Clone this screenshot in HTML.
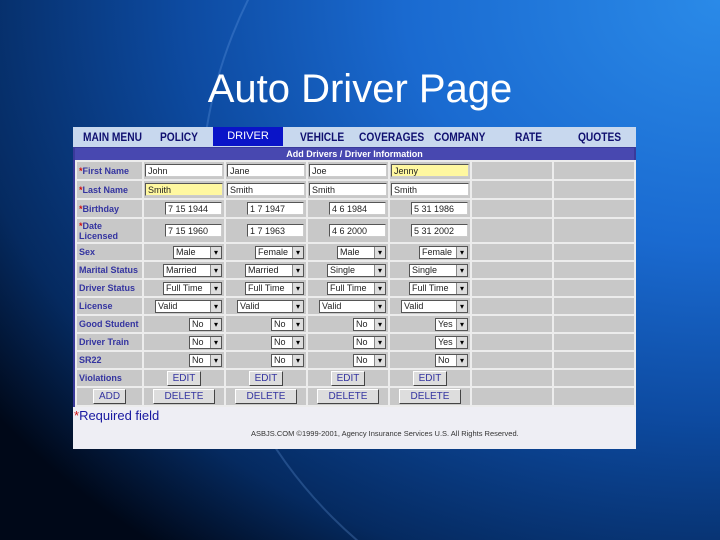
<!DOCTYPE html><html style="width:720px;height:540px;overflow:hidden;margin:0;background:#0d4aa0"><head><style>
body{margin:0;width:720px;height:540px;overflow:hidden;position:relative;font-family:"Liberation Sans",sans-serif;
background:radial-gradient(ellipse 900px 700px at 720px 0px,#2a8ae8 0%,#1a6ad0 35%,#0d4aa0 60%,#052a60 85%,#000818 100%);}
.wrap{position:absolute;left:0;top:0;width:720px;height:540px;overflow:hidden}
.arc{position:absolute;left:200px;top:-250px;width:900px;height:900px;border-radius:50%;border:2px solid rgba(120,170,240,.25);box-sizing:border-box}
h1{position:absolute;top:67px;left:0;width:720px;text-align:center;margin:0;font-weight:normal;font-size:40px;color:#fff;}
.pan{position:absolute;left:73px;top:127px;width:563px;height:322px;background:#eeeef4;}
.nav{position:absolute;left:0;top:0;width:563px;height:20px;background:#c8d8ee;}
.nav span{position:absolute;top:3px;font:bold 12px "Liberation Sans Narrow","Liberation Sans",sans-serif;color:#101070;transform:scaleX(.85);transform-origin:left;}
.nav .on{top:0;height:19px;background:#0a14c8;color:#fff;font-weight:normal;font-size:11px;transform:none;text-align:center;line-height:19px}
.frame{position:absolute;left:0;top:20px;width:563px;height:260px;background:#3a3a9a;}
.hd{position:absolute;left:2px;top:1px;width:559px;height:12px;background:#4848b0;color:#fff;font:bold 9px "Liberation Sans",sans-serif;text-align:center;line-height:12px;}
table{position:absolute;left:2px;top:13px;border-collapse:collapse;}
td{background:#c8c8c8;border:2px solid #ececec;padding:0;font-size:9px;color:#3434a0;font-weight:bold;position:relative;vertical-align:middle}
td.l{padding-left:2px}
.r{color:#d01010}
.i{display:inline-block;background:#fff;border:1px solid #555;border-right-color:#ccc;border-bottom-color:#ccc;height:13px;font:9px "Liberation Sans",sans-serif;color:#222;line-height:12px;padding-left:2px;box-sizing:border-box;vertical-align:middle;text-align:left}
.y{background:#fff8a0}
.s{display:inline-block;background:#fff;border:1px solid #555;height:13px;font:9px "Liberation Sans",sans-serif;color:#222;line-height:11px;padding-left:2px;box-sizing:border-box;position:relative;vertical-align:middle;text-align:left;white-space:nowrap;overflow:hidden}
.s:after{content:"▾";position:absolute;right:0;top:0;width:10px;height:11px;background:#ddd;border-left:1px solid #888;font-size:8px;text-align:center;color:#000}
.b{display:inline-block;background:#ddd;border:1px solid #fff;border-right-color:#444;border-bottom-color:#444;height:15px;font:10px "Liberation Sans",sans-serif;color:#3434a0;text-align:center;line-height:14px;box-sizing:border-box}
.c{text-align:center}.rt{text-align:right;padding-right:2px}
</style></head><body>
<div class="wrap"><div class="arc"></div></div>
<h1>Auto Driver Page</h1>
<div class="pan">
<div class="nav">
<span style="left:10px">MAIN MENU</span><span style="left:87px">POLICY</span>
<span class="on" style="left:140px;width:70px">DRIVER</span>
<span style="left:227px">VEHICLE</span><span style="left:286px">COVERAGES</span><span style="left:361px">COMPANY</span><span style="left:442px">RATE</span><span style="left:505px">QUOTES</span>
</div>
<div class="frame"><div class="hd">Add Drivers / Driver Information</div>
<table>
<colgroup><col style="width:67px"><col style="width:82px"><col style="width:82px"><col style="width:82px"><col style="width:82px"><col style="width:82px"><col style="width:82px"></colgroup>
<tr style="height:19px"><td class="l"><span class="r">*</span>First Name</td><td class="c"><span class="i" style="width:78px">John</span></td><td class="c"><span class="i" style="width:78px">Jane</span></td><td class="c"><span class="i" style="width:78px">Joe</span></td><td class="c"><span class="i y" style="width:78px">Jenny</span></td><td></td><td></td></tr>
<tr style="height:19px"><td class="l"><span class="r">*</span>Last Name</td><td class="c"><span class="i y" style="width:78px">Smith</span></td><td class="c"><span class="i" style="width:78px">Smith</span></td><td class="c"><span class="i" style="width:78px">Smith</span></td><td class="c"><span class="i" style="width:78px">Smith</span></td><td></td><td></td></tr>
<tr style="height:19px"><td class="l"><span class="r">*</span>Birthday</td><td class="rt"><span class="i" style="width:57px">7 15 1944</span></td><td class="rt"><span class="i" style="width:57px">1 7 1947</span></td><td class="rt"><span class="i" style="width:57px">4 6 1984</span></td><td class="rt"><span class="i" style="width:57px">5 31 1986</span></td><td></td><td></td></tr>
<tr style="height:25px"><td class="l" style="line-height:10px"><span class="r">*</span>Date<br>Licensed</td><td class="rt"><span class="i" style="width:57px">7 15 1960</span></td><td class="rt"><span class="i" style="width:57px">1 7 1963</span></td><td class="rt"><span class="i" style="width:57px">4 6 2000</span></td><td class="rt"><span class="i" style="width:57px">5 31 2002</span></td><td></td><td></td></tr>
<tr style="height:18px"><td class="l">Sex</td><td class="rt"><span class="s" style="width:49px">Male</span></td><td class="rt"><span class="s" style="width:49px">Female</span></td><td class="rt"><span class="s" style="width:49px">Male</span></td><td class="rt"><span class="s" style="width:49px">Female</span></td><td></td><td></td></tr>
<tr style="height:18px"><td class="l">Marital Status</td><td class="rt"><span class="s" style="width:59px">Married</span></td><td class="rt"><span class="s" style="width:59px">Married</span></td><td class="rt"><span class="s" style="width:59px">Single</span></td><td class="rt"><span class="s" style="width:59px">Single</span></td><td></td><td></td></tr>
<tr style="height:18px"><td class="l">Driver Status</td><td class="rt"><span class="s" style="width:59px">Full Time</span></td><td class="rt"><span class="s" style="width:59px">Full Time</span></td><td class="rt"><span class="s" style="width:59px">Full Time</span></td><td class="rt"><span class="s" style="width:59px">Full Time</span></td><td></td><td></td></tr>
<tr style="height:18px"><td class="l">License</td><td class="rt"><span class="s" style="width:67px">Valid</span></td><td class="rt"><span class="s" style="width:67px">Valid</span></td><td class="rt"><span class="s" style="width:67px">Valid</span></td><td class="rt"><span class="s" style="width:67px">Valid</span></td><td></td><td></td></tr>
<tr style="height:18px"><td class="l">Good Student</td><td class="rt"><span class="s" style="width:33px">No</span></td><td class="rt"><span class="s" style="width:33px">No</span></td><td class="rt"><span class="s" style="width:33px">No</span></td><td class="rt"><span class="s" style="width:33px">Yes</span></td><td></td><td></td></tr>
<tr style="height:18px"><td class="l">Driver Train</td><td class="rt"><span class="s" style="width:33px">No</span></td><td class="rt"><span class="s" style="width:33px">No</span></td><td class="rt"><span class="s" style="width:33px">No</span></td><td class="rt"><span class="s" style="width:33px">Yes</span></td><td></td><td></td></tr>
<tr style="height:18px"><td class="l">SR22</td><td class="rt"><span class="s" style="width:33px">No</span></td><td class="rt"><span class="s" style="width:33px">No</span></td><td class="rt"><span class="s" style="width:33px">No</span></td><td class="rt"><span class="s" style="width:33px">No</span></td><td></td><td></td></tr>
<tr style="height:18px"><td class="l">Violations</td><td class="c"><span class="b" style="width:34px">EDIT</span></td><td class="c"><span class="b" style="width:34px">EDIT</span></td><td class="c"><span class="b" style="width:34px">EDIT</span></td><td class="c"><span class="b" style="width:34px">EDIT</span></td><td></td><td></td></tr>
<tr style="height:19px"><td class="c"><span class="b" style="width:33px">ADD</span></td><td class="c"><span class="b" style="width:62px">DELETE</span></td><td class="c"><span class="b" style="width:62px">DELETE</span></td><td class="c"><span class="b" style="width:62px">DELETE</span></td><td class="c"><span class="b" style="width:62px">DELETE</span></td><td></td><td></td></tr>
</table></div>
<div style="position:absolute;left:1px;top:281px;font-size:13px;color:#1818a0"><span class="r">*</span>Required field</div>
<div style="position:absolute;left:178px;top:302px;font-size:7.5px;color:#333">ASBJS.COM ©1999-2001, Agency Insurance Services U.S. All Rights Reserved.</div>
</div>
</body></html>
